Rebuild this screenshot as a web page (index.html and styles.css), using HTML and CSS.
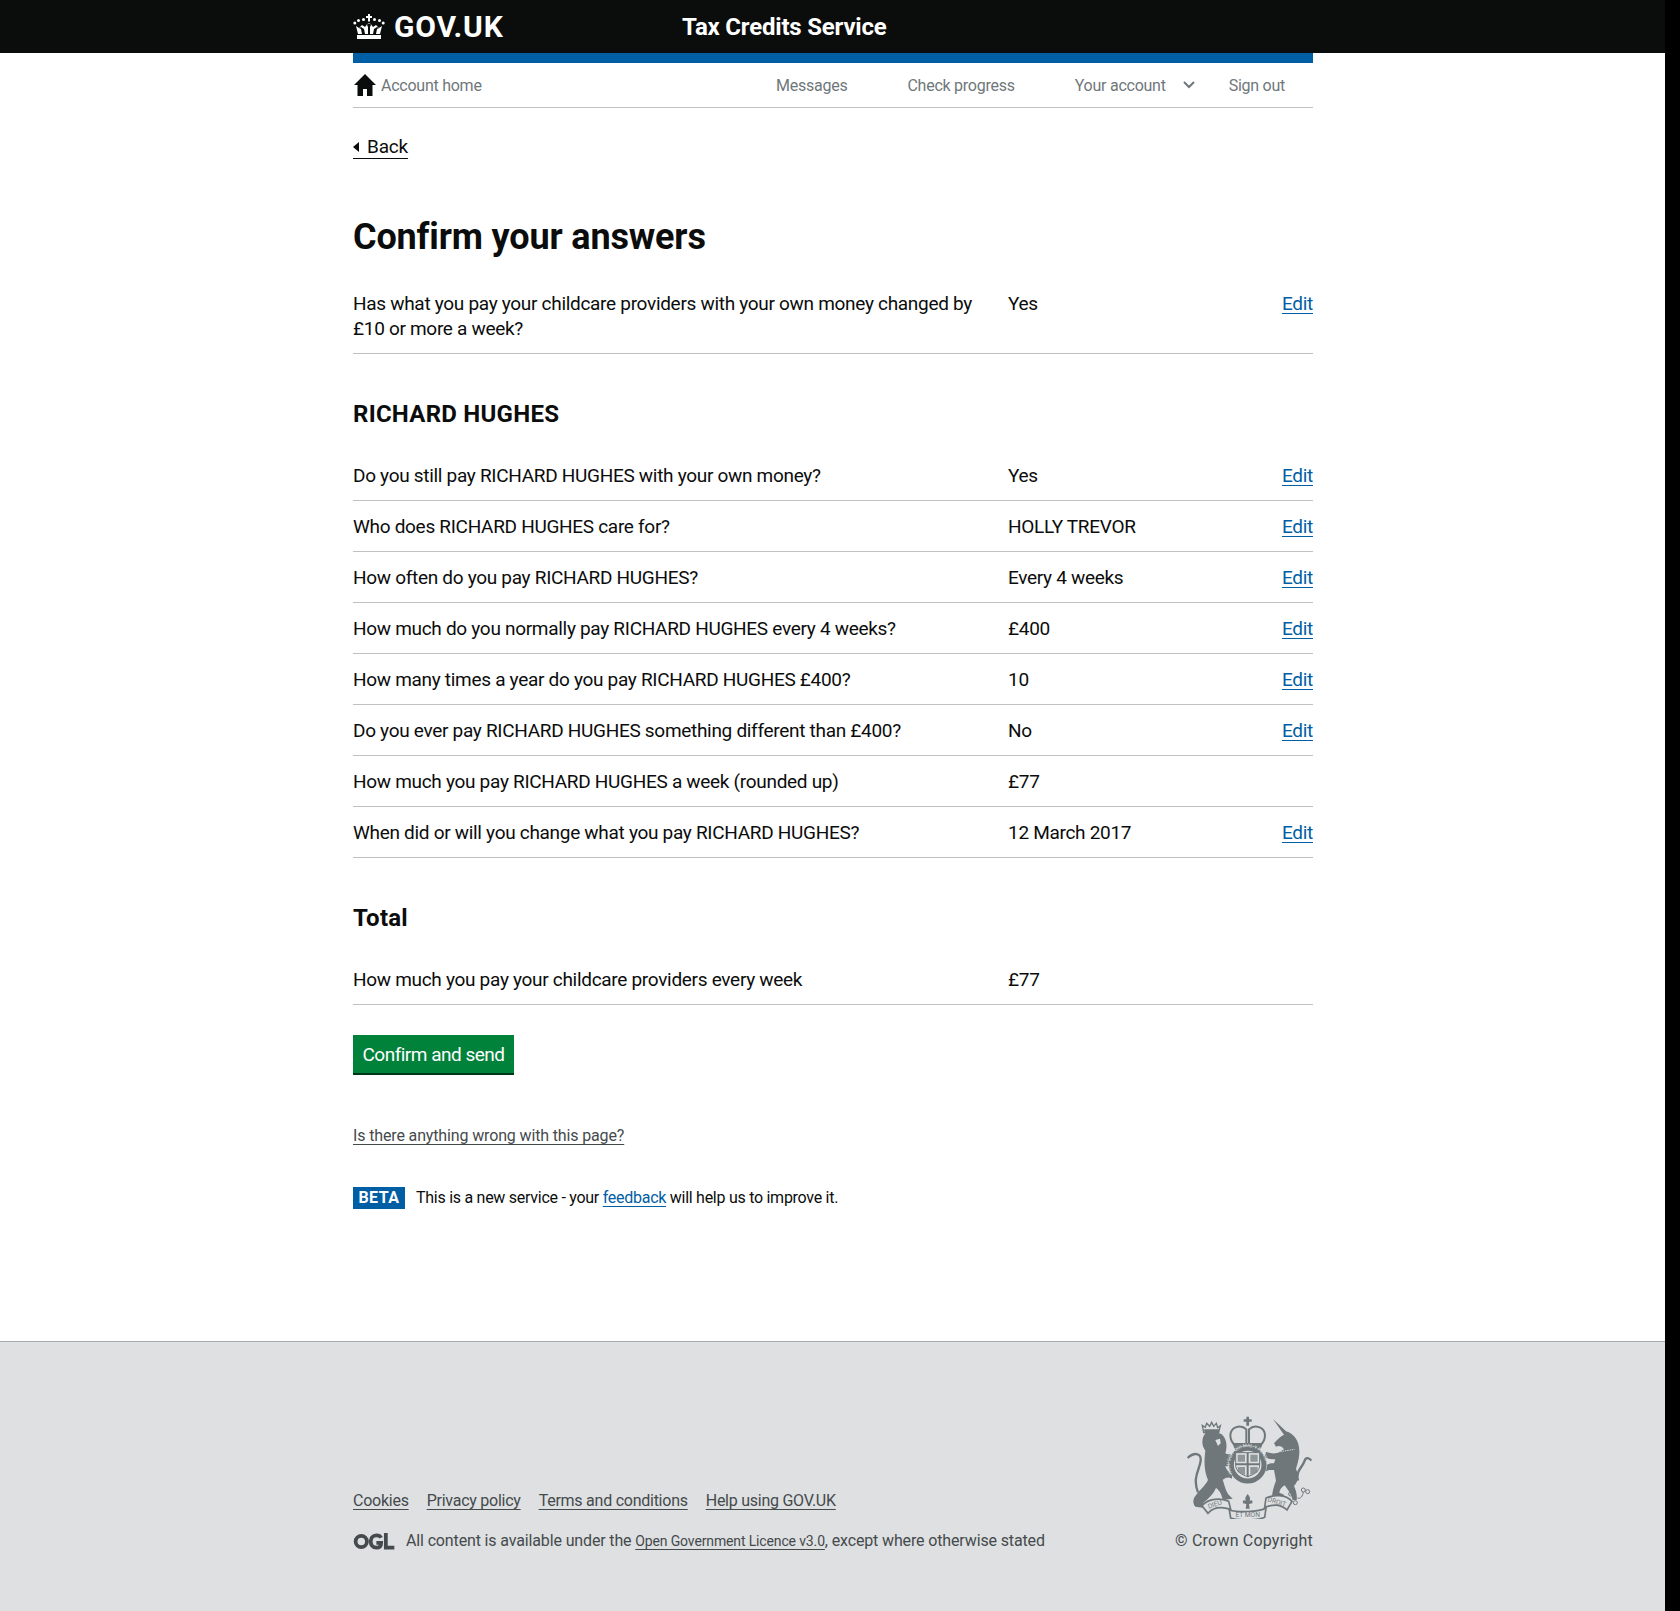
FILE: index.html
```html
<!DOCTYPE html>
<html lang="en">
<head>
    <meta charset="UTF-8">
    <title>Confirm your answers - Tax Credits Service - GOV.UK</title>
    <link rel="stylesheet" href="styles.css">
</head>
<body>
    <div class="page">
        <header class="topbar">
            <div class="wrap topbar-inner">
                <a class="logo" href="#">
                    <svg class="crown" viewBox="0 0 32 25" width="32" height="25" fill="#fff">
                        <path d="M15 0h2v2h2v2h-2v3.500h-2V4h-2V2h2z"/>
                        <path d="M4 21h24v4H4z"/>
                        <path d="M3 12l2 8h4l-1-5-2-1 2-1 3 2 1 5h3v-7l-1-2 1-2h2l1 2-1 2v7h3l1-5 3-2 2 1-2 1-1 5h4l2-8-3 2-3-3-3 2-3-4-1 1-1-1-3 4-3-2-3 3z"/>
                        <circle cx="1.800" cy="9" r="1.500"/><circle cx="5.500" cy="6.500" r="1.500"/><circle cx="10.500" cy="5.500" r="1.500"/>
                        <circle cx="21.500" cy="5.500" r="1.500"/><circle cx="26.500" cy="6.500" r="1.500"/><circle cx="30.200" cy="9" r="1.500"/>
                    </svg>
                    <span>GOV.UK</span>
                </a>
                <span class="service-name">Tax Credits Service</span>
            </div>
        </header>

        <div class="wrap">
            <div class="blue-bar"></div>
            <nav class="account-nav">
                <a class="nav-home" href="#">
                    <svg viewBox="0 0 24 22" width="24" height="22" fill="#0b0c0c"><path d="M12 0 1 11h3.500v11h5.500v-7h4v7h5.500V11H23z"/></svg>
                    Account home
                </a>
                <div class="nav-links">
                    <a href="#">Messages</a>
                    <a href="#">Check progress</a>
                    <a class="nav-account" href="#">Your account
                        <svg viewBox="0 0 12 8" width="12" height="8" fill="none" stroke="#6f777b" stroke-width="2"><path d="M1 1l5 5 5-5"/></svg>
                    </a>
                    <a href="#">Sign out</a>
                </div>
            </nav>

            <main>
                <a class="back" href="#">Back</a>
                <h1>Confirm your answers</h1>

                <div class="row">
                    <div class="question">Has what you pay your childcare providers with your own money changed by £10 or more a week?</div>
                    <div class="answer">Yes</div>
                    <a class="edit" href="#">Edit</a>
                </div>

                <h2>RICHARD HUGHES</h2>
                <div class="row">
                    <div class="question">Do you still pay RICHARD HUGHES with your own money?</div>
                    <div class="answer">Yes</div>
                    <a class="edit" href="#">Edit</a>
                </div>
                <div class="row">
                    <div class="question">Who does RICHARD HUGHES care for?</div>
                    <div class="answer">HOLLY TREVOR</div>
                    <a class="edit" href="#">Edit</a>
                </div>
                <div class="row">
                    <div class="question">How often do you pay RICHARD HUGHES?</div>
                    <div class="answer">Every 4 weeks</div>
                    <a class="edit" href="#">Edit</a>
                </div>
                <div class="row">
                    <div class="question">How much do you normally pay RICHARD HUGHES every 4 weeks?</div>
                    <div class="answer">£400</div>
                    <a class="edit" href="#">Edit</a>
                </div>
                <div class="row">
                    <div class="question">How many times a year do you pay RICHARD HUGHES £400?</div>
                    <div class="answer">10</div>
                    <a class="edit" href="#">Edit</a>
                </div>
                <div class="row">
                    <div class="question">Do you ever pay RICHARD HUGHES something different than £400?</div>
                    <div class="answer">No</div>
                    <a class="edit" href="#">Edit</a>
                </div>
                <div class="row">
                    <div class="question">How much you pay RICHARD HUGHES a week (rounded up)</div>
                    <div class="answer">£77</div>
                </div>
                <div class="row">
                    <div class="question">When did or will you change what you pay RICHARD HUGHES?</div>
                    <div class="answer">12 March 2017</div>
                    <a class="edit" href="#">Edit</a>
                </div>

                <h2>Total</h2>
                <div class="row">
                    <div class="question">How much you pay your childcare providers every week</div>
                    <div class="answer">£77</div>
                </div>

                <button class="confirm" type="button">Confirm and send</button>

                <p class="wrong"><a href="#">Is there anything wrong with this page?</a></p>

                <p class="beta"><span class="beta-tag">BETA</span>This is a new service - your <a href="#">feedback</a> will help us to improve it.</p>
            </main>
        </div>

        <footer class="footer">
            <div class="wrap footer-inner">
                <div class="footer-left">
                    <div class="footer-links">
                        <a href="#">Cookies</a>
                        <a href="#">Privacy policy</a>
                        <a href="#">Terms and conditions</a>
                        <a href="#">Help using GOV.UK</a>
                    </div>
                    <div class="licence">
                        <svg viewBox="0 0 44 18" width="43" height="17" fill="none" stroke="#454a4c" stroke-width="4">
                            <circle cx="8" cy="9" r="6"/>
                            <path d="M29 5c-1-2-3-2.500-5-2.500-4 0-6 3-6 6.500s2 6.500 6 6.500c3 0 5-1.500 5-5h-5"/>
                            <path d="M34 0v15.500h9"/>
                        </svg>
                        <span>All content is available under the <a class="licence-link" href="#">Open Government Licence v3.0</a>, except where otherwise stated</span>
                    </div>
                </div>
                <div class="footer-right">
                    <svg class="crest" viewBox="25 10 378 315" width="126" height="105" fill="#6f777b">
                        <!-- royal crown -->
                        <path d="M203 18h8v8h8v7h-8v12h-8V33h-8v-7h8z"/>
                        <path d="M165 100c-14-16-14-42 6-50 12-5 24-2 32 6v44h8V56c8-8 20-11 32-6 20 8 20 34 6 50z" fill="none" stroke="#6f777b" stroke-width="6"/>
                        <path d="M164 97h86v8l-6 14h-74l-6-14z"/>
                        <!-- lion's crown -->
                        <path d="M75 66l-4-22 9 6 4-12 9 9 6-12 6 12 8-9 4 13 8-6-5 21z" fill="none" stroke="#6f777b" stroke-width="4"/>
                        <path d="M76 56h46l-2 11H78z"/>
                        <!-- lion -->
                        <path d="M80 68C68 82 68 105 80 120c-4 30-4 60 8 88-10 20-28 32-42 54-4 10-2 20 4 26l28 4-4-16c18-14 30-26 38-44 12 8 18 23 20 36l30-4-12-12c-10-12-12-30-18-44 8-8 18-10 28-4v-12c-10-8-18-16-20-26 12 4 20 2 28-6l-8-28c-8-2-14 0-20-4 6-18 6-43-12-58-16-8-36-8-48-2z"/>
                        <path d="M27 142c18-17 41-17 39 8-2 25-26 50-8 95" fill="none" stroke="#6f777b" stroke-width="7"/>
                        <path d="M110 88l14-4 2 14-8 8z" fill="#dee0e2"/>
                        <!-- unicorn -->
                        <path d="M283 25l39 37c23 6 40 28 40 60 0 23-6 38-10 53 10 20 6 40-6 51 6 14 10 26 8 42h-12c-4-18-14-30-24-44-10 6-14 12-16 22l14 6-2 8h-34c0-17 6-34 12-50l-6-32c-11 0-16-2-24 4l-6-12c10-10 20-14 30-12l4-12c-10 0-22 0-32-8l4-14c13 4 23 6 36 2l18-10c-6-10-16-12-24-8l-6-10c10-12 22-22 30-26z"/>
                        <path d="M298 124l50-8" fill="none" stroke="#dee0e2" stroke-width="3" stroke-dasharray="4 3"/>
                        <path d="M358 210c-8-30 14-40 20-60 4-12 14-8 20 0" fill="none" stroke="#6f777b" stroke-width="7"/>
                        <circle cx="336" cy="250" r="6" fill="none" stroke="#6f777b" stroke-width="3"/>
                        <circle cx="350" cy="276" r="6" fill="none" stroke="#6f777b" stroke-width="3"/>
                        <circle cx="374" cy="238" r="6" fill="none" stroke="#6f777b" stroke-width="3"/>
                        <circle cx="387" cy="243" r="6" fill="none" stroke="#6f777b" stroke-width="3"/>
                        <path d="M356 262c10 4 16-6 18-18" fill="none" stroke="#6f777b" stroke-width="3"/>
                        <!-- garter and shield -->
                        <circle cx="207" cy="162" r="58" fill="#dee0e2"/>
                        <circle cx="207" cy="162" r="49" fill="none" stroke="#6f777b" stroke-width="15"/>
                        <path id="garter" d="M168 198a53 53 0 1 1 78 0" fill="none"/>
                        <text class="crest-garter"><textPath href="#garter" startOffset="5%">HONI SOIT QUI MAL Y PENSE</textPath></text>
                        <path d="M171 126h72v38c0 18-18 28-36 34-18-6-36-16-36-34z" fill="#dee0e2" stroke="#6f777b" stroke-width="3"/>
                        <path d="M204 126h6v72h-6zM171 158h72v6h-72z"/>
                        <path d="M177 132h22v21h-22zM215 132h22v21h-22zM215 169h22v16l-22 8zM177 169h22v24l-22-9z" opacity=".7"/>
                        <!-- motto ribbon -->
                        <path d="M70 285c20-23 55-23 80-13l6 24c-26-8-51-8-68 12z" fill="#dee0e2" stroke="#6f777b" stroke-width="5"/>
                        <path d="M340 272c-20-22-55-20-78-10l-4 28c27-10 47-10 67 8z" fill="#dee0e2" stroke="#6f777b" stroke-width="5"/>
                        <path d="M152 298c23 7 88 7 110-6l-4 28c-23 10-78 10-102 2z" fill="#dee0e2" stroke="#6f777b" stroke-width="5"/>
                        <path d="M207 250c6 7 9 12 6 20 6-4 10 0 8 8l-10 2 2 14h-12l2-14-10-2c-2-8 2-12 8-8-3-8 0-13 6-20z"/>
                        <text class="crest-motto" x="90" y="294" transform="rotate(-18 90 294)">DIEU</text>
                        <text class="crest-motto" x="207" y="318" text-anchor="middle">ET MON</text>
                        <text class="crest-motto" x="266" y="272" transform="rotate(16 266 272)">DROIT</text>
                    </svg>
                    <div class="copyright">© Crown Copyright</div>
                </div>
            </div>
        </footer>
    </div>
</body>
</html>
```

FILE: styles.css
```css
html, body {
    margin: 0;
    padding: 0;
}
body {
    background: #000;
    font-family: Roboto, Arial, sans-serif;
    color: #0b0c0c;
}
a {
    color: inherit;
    text-underline-offset: 3px;
    text-decoration-thickness: 1px;
}
.page {
    width: 1665px;
    min-height: 1611px;
    background: #fff;
    display: flex;
    flex-direction: column;
}
.wrap {
    width: 960px;
    margin-left: 353px;
}
.topbar {
    background: #0b0c0c;
    height: 53px;
    color: #fff;
}
.topbar-inner {
    display: flex;
    align-items: center;
    height: 53px;
}
.logo {
    display: flex;
    align-items: center;
    gap: 9px;
    width: 329px;
    color: #fff;
    text-decoration: none;
    font-size: 30px;
    font-weight: 700;
    letter-spacing: 0.8px;
}
.service-name {
    font-size: 24px;
    font-weight: 700;
    letter-spacing: -0.2px;
}
.blue-bar {
    height: 10px;
    background: #005ea5;
}
.account-nav {
    display: flex;
    justify-content: space-between;
    align-items: center;
    height: 44px;
    border-bottom: 1px solid #bfc1c3;
    font-size: 16px;
    letter-spacing: -0.25px;
}
.account-nav a {
    text-decoration: none;
    color: #6f777b;
}
.nav-home {
    display: flex;
    align-items: center;
    gap: 4px;
}
.nav-links {
    display: flex;
    gap: 60px;
    padding-right: 28px;
}
.nav-account {
    display: flex;
    align-items: center;
    gap: 17px;
    margin-right: -26px;
}
main {
    padding-bottom: 132px;
}
.back {
    display: block;
    width: fit-content;
    margin-top: 29px;
    padding: 0 0 1px 14px;
    position: relative;
    font-size: 19px;
    line-height: 20px;
    letter-spacing: -0.2px;
    text-decoration: none;
    border-bottom: 1px solid #0b0c0c;
}
.back::before {
    content: "";
    position: absolute;
    left: 0;
    top: 5px;
    border-style: solid;
    border-width: 5px 6px 5px 0;
    border-color: transparent #0b0c0c transparent transparent;
}
h1 {
    font-size: 36px;
    line-height: 40px;
    font-weight: 700;
    letter-spacing: -0.15px;
    margin: 58px 0 21px;
}
h2 {
    font-size: 24px;
    line-height: 30px;
    font-weight: 700;
    letter-spacing: 0.25px;
    margin: 45px 0 21px;
}
.row {
    display: flex;
    align-items: flex-start;
    border-bottom: 1px solid #bfc1c3;
    padding: 13px 0 12px;
    font-size: 19px;
    line-height: 25px;
    letter-spacing: -0.3px;
}
.question {
    width: 625px;
    padding-right: 30px;
    flex: none;
}
.answer {
    flex: 1;
}
.edit {
    color: #005ea5;
}
.confirm {
    display: block;
    margin-top: 30px;
    height: 40px;
    width: 161px;
    padding: 0;
    background: #00823b;
    color: #fff;
    border: none;
    border-bottom: 2px solid #003618;
    font-family: inherit;
    font-size: 19px;
    letter-spacing: -0.5px;
}
.wrong {
    margin: 51px 0 0;
    font-size: 16px;
    line-height: 20px;
    letter-spacing: -0.14px;
    color: #454a4c;
}
.beta {
    margin: 41px 0 0;
    font-size: 16px;
    line-height: 22px;
    letter-spacing: -0.27px;
    display: flex;
    align-items: center;
    white-space: pre;
}
.beta a {
    color: #005ea5;
}
.beta-tag {
    width: 52px;
    text-align: center;
    background: #005ea5;
    color: #fff;
    font-weight: 700;
    letter-spacing: 0.5px;
    margin-right: 11px;
}
.footer {
    background: #dee0e2;
    border-top: 1px solid #a1acb2;
    flex: 1;
    color: #454a4c;
}
.footer-inner {
    display: flex;
    justify-content: space-between;
    align-items: flex-end;
    padding-top: 72px;
}
.footer-links {
    display: flex;
    gap: 18px;
    font-size: 16px;
    line-height: 20px;
    letter-spacing: -0.25px;
    margin-bottom: 20px;
}
.licence {
    display: flex;
    align-items: center;
    gap: 10px;
    font-size: 16px;
    line-height: 20px;
    letter-spacing: -0.14px;
}
.licence-link {
    font-size: 14px;
}
.footer-right {
    text-align: right;
}
.crest {
    display: block;
    margin: 0 0 12px auto;
}
.crest-motto {
    font-size: 20px;
    font-family: Roboto, Arial, sans-serif;
    fill: #6f777b;
}
.crest-garter {
    font-size: 14px;
    font-family: Roboto, Arial, sans-serif;
    fill: #dee0e2;
}
.copyright {
    font-size: 16px;
    line-height: 20px;
    letter-spacing: 0.2px;
}
```
